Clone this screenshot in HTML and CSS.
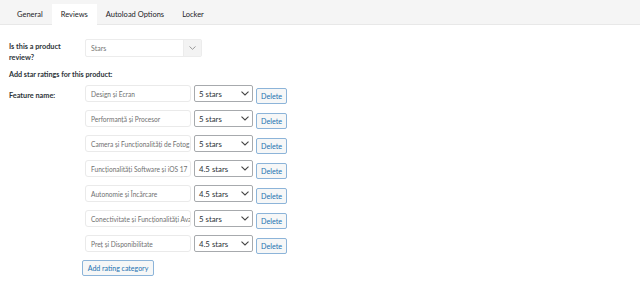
FILE: index.html
```html
<!DOCTYPE html>
<html lang="ro">
  <head>
    <title>Product review settings</title>
    <meta name="viewport" content="width=device-width, initial-scale=1">
    <link rel="stylesheet" href="styles.css">
  </head>
  <body>
    <nav class="tabs">
      <span class="tab">General</span>
      <span class="tab active">Reviews</span>
      <span class="tab">Autoload Options</span>
      <span class="tab">Locker</span>
    </nav>

    <div class="panel">
      <div class="field">
        <label class="field-label">Is this a product review?</label>
        <div class="combo">
          <span class="combo-value">Stars</span>
          <span class="combo-arrow">
            <svg width="7" height="4" viewBox="0 0 7 4"><path d="M0.5 0.5 L3.5 3.3 L6.5 0.5" fill="none" stroke="#999" stroke-width="1"/></svg>
          </span>
        </div>
      </div>

      <p class="intro">Add star ratings for this product:</p>

      <div class="field">
        <label class="field-label feature-label">Feature name:</label>
        <div class="ratings">
          <div class="rating-row">
            <span class="text-input">Design și Ecran</span>
            <span class="select">5 stars<svg width="8" height="5" viewBox="0 0 8 5"><path d="M0.5 0.7 L4 4 L7.5 0.7" fill="none" stroke="#444" stroke-width="1.1"/></svg></span>
            <span class="button">Delete</span>
          </div>
          <div class="rating-row">
            <span class="text-input">Performanță și Procesor</span>
            <span class="select">5 stars<svg width="8" height="5" viewBox="0 0 8 5"><path d="M0.5 0.7 L4 4 L7.5 0.7" fill="none" stroke="#444" stroke-width="1.1"/></svg></span>
            <span class="button">Delete</span>
          </div>
          <div class="rating-row">
            <span class="text-input">Camera și Funcționalități de Fotog</span>
            <span class="select">5 stars<svg width="8" height="5" viewBox="0 0 8 5"><path d="M0.5 0.7 L4 4 L7.5 0.7" fill="none" stroke="#444" stroke-width="1.1"/></svg></span>
            <span class="button">Delete</span>
          </div>
          <div class="rating-row">
            <span class="text-input">Funcționalități Software și iOS 17</span>
            <span class="select">4.5 stars<svg width="8" height="5" viewBox="0 0 8 5"><path d="M0.5 0.7 L4 4 L7.5 0.7" fill="none" stroke="#444" stroke-width="1.1"/></svg></span>
            <span class="button">Delete</span>
          </div>
          <div class="rating-row">
            <span class="text-input">Autonomie și Încărcare</span>
            <span class="select">4.5 stars<svg width="8" height="5" viewBox="0 0 8 5"><path d="M0.5 0.7 L4 4 L7.5 0.7" fill="none" stroke="#444" stroke-width="1.1"/></svg></span>
            <span class="button">Delete</span>
          </div>
          <div class="rating-row">
            <span class="text-input">Conectivitate și Funcționalități Ava</span>
            <span class="select">5 stars<svg width="8" height="5" viewBox="0 0 8 5"><path d="M0.5 0.7 L4 4 L7.5 0.7" fill="none" stroke="#444" stroke-width="1.1"/></svg></span>
            <span class="button">Delete</span>
          </div>
          <div class="rating-row">
            <span class="text-input">Preț și Disponibilitate</span>
            <span class="select">4.5 stars<svg width="8" height="5" viewBox="0 0 8 5"><path d="M0.5 0.7 L4 4 L7.5 0.7" fill="none" stroke="#444" stroke-width="1.1"/></svg></span>
            <span class="button">Delete</span>
          </div>
          <span class="button add-button">Add rating category</span>
        </div>
      </div>
    </div>
  </body>
</html>
```

FILE: styles.css
```css
body {
  margin: 0;
  background-color: #fff;
  color: #2c3338;
  font-family: "Lato", "Open Sans", sans-serif;
  font-size: 8px;
}

/* tab strip */
.tabs {
  display: flex;
  height: 24px;
  padding-left: 8px;
  background-color: #f5f5f5;
  border-bottom: 1px solid #e8e8e8;
}
.tab {
  display: flex;
  align-items: center;
  height: 21px;
  margin-top: 4px;
  padding: 0 9px;
  font-size: 7.5px;
  color: #1d2327;
}
.tab.active {
  margin-bottom: -1px;
  background-color: #fff;
}

/* form */
.panel {
  padding: 14px 9px 0;
}
.field {
  display: flex;
}
.field-label {
  width: 76px;
  flex-shrink: 0;
  padding-top: 2px;
  font-weight: 700;
  font-size: 7.3px;
  line-height: 11px;
}
.feature-label {
  padding-top: 5px;
}
.combo {
  display: flex;
  width: 117px;
  height: 18px;
  box-sizing: border-box;
  border: 1px solid #ececec;
  border-radius: 2px;
}
.combo-value {
  flex: 1;
  display: flex;
  align-items: center;
  padding-left: 5px;
  font-size: 7px;
  color: #777;
}
.combo-arrow {
  display: flex;
  align-items: center;
  justify-content: center;
  width: 17px;
  border-left: 1px solid #ececec;
  background-color: #f3f3f3;
}
.intro {
  margin: 6px 0 5px;
  font-weight: 700;
  font-size: 7.2px;
  line-height: 11px;
}

.ratings {
  display: flex;
  flex-direction: column;
  gap: 8px;
}
.rating-row {
  display: flex;
  gap: 3px;
  height: 17px;
}
.text-input {
  display: flex;
  align-items: center;
  width: 106px;
  box-sizing: border-box;
  padding: 0 1px 0 5px;
  border: 1px solid #eaeaea;
  border-radius: 3px;
  font-size: 6.6px;
  color: #707070;
  white-space: nowrap;
  overflow: hidden;
}
.select {
  display: flex;
  align-items: center;
  justify-content: space-between;
  width: 59px;
  height: 17px;
  box-sizing: border-box;
  padding: 0 3px 0 4px;
  border: 1px solid #a7aaad;
  border-radius: 2px;
  font-size: 7.8px;
  color: #2c3338;
}
.button {
  display: flex;
  align-items: center;
  justify-content: center;
  width: 31px;
  height: 16px;
  margin-top: 3px;
  box-sizing: border-box;
  border: 1px solid #8cb4d9;
  border-radius: 2px;
  background-color: #f6f7f7;
  font-size: 7.2px;
  color: #2271b1;
}
.add-button {
  width: 72px;
  height: 16px;
  margin: 0 0 0 -3px;
  font-size: 7px;
}
```
